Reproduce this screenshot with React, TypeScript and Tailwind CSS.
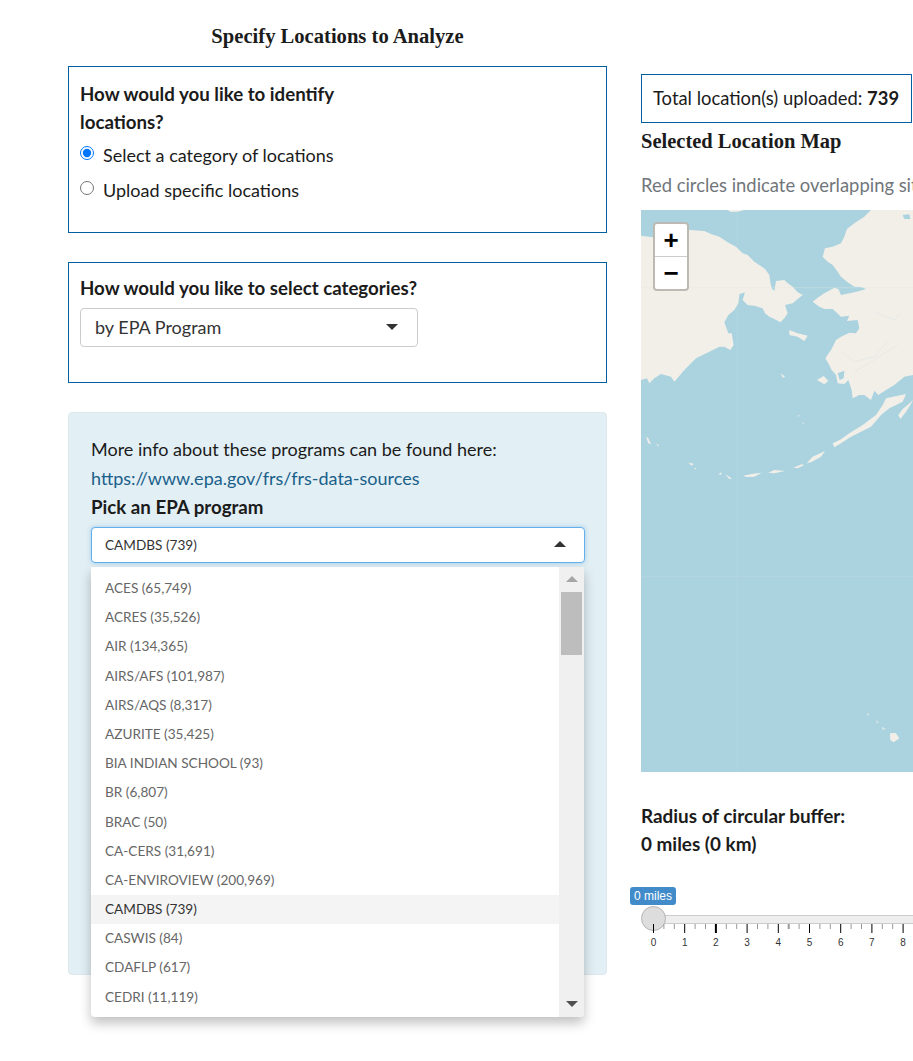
const BODY_FONT = 'font-["Lato","Noto_Sans",sans-serif]';

const programs = [
  'ACES (65,749)',
  'ACRES (35,526)',
  'AIR (134,365)',
  'AIRS/AFS (101,987)',
  'AIRS/AQS (8,317)',
  'AZURITE (35,425)',
  'BIA INDIAN SCHOOL (93)',
  'BR (6,807)',
  'BRAC (50)',
  'CA-CERS (31,691)',
  'CA-ENVIROVIEW (200,969)',
  'CAMDBS (739)',
  'CASWIS (84)',
  'CDAFLP (617)',
  'CEDRI (11,119)',
];

function Caret({ up, className }: { up?: boolean; className?: string }) {
  return (
    <svg width="12" height="6" viewBox="0 0 12 6" className={className}>
      <path d={up ? 'M0 6 L6 0 L12 6 Z' : 'M0 0 L12 0 L6 6 Z'} fill="currentColor" />
    </svg>
  );
}

function ScrollBar() {
  return (
    <div className="w-[25px] bg-[#f0f0f0] flex flex-col items-center shrink-0">
      <Caret up className="mt-[9px] text-[#a6a6a6]" />
      <div className="w-[21px] h-[63px] bg-[#bdbdbd] mt-[10px]" />
      <Caret className="mt-auto mb-[10px] text-[#505050]" />
    </div>
  );
}

function ProgramMenu() {
  return (
    <div className="absolute left-0 top-full mt-[4px] w-[493px] h-[450px] bg-white rounded-b-[4px] overflow-hidden flex shadow-[0_6px_12px_rgba(0,0,0,0.25)] z-10">
      <div className="flex-1 pt-[7px]">
        {programs.map((p) => (
          <div
            key={p}
            className={`h-[29.2px] leading-[29.2px] pl-[14px] text-[13.6px] ${
              p === 'CAMDBS (739)' ? 'bg-[#f4f4f4] text-[#333333]' : 'text-[#666666]'
            }`}
          >
            {p}
          </div>
        ))}
      </div>
      <ScrollBar />
    </div>
  );
}

function AlaskaMap() {
  return (
    <svg viewBox="0 15 816 1686" width="272" height="562" className="block">
      <defs>
        <filter id="tileBlur" x="-5%" y="-5%" width="110%" height="110%">
          <feGaussianBlur stdDeviation="1.4" />
        </filter>
      </defs>
      <rect x="0" y="15" width="816" height="1686" fill="#aad3df" />
      <g stroke="#b5d8e0" strokeWidth="2" fill="none">
        <path d="M288 15 V1701" />
        <path d="M0 1115 H816" />
      </g>
      <g fill="#f2efe9" filter="url(#tileBlur)">
        {/* Chukotka */}
        <path d="M0 92 L60 100 L145 75 L190 78 L212 88 L235 95 L260 112 L285 125 L305 145 L320 150 L340 170 L355 180 L372 192 L385 210 L388 232 L392 250 L400 258 L405 228 L430 225 L440 235 L455 245 L470 262 L485 270 L470 282 L455 295 L432 300 L440 325 L430 340 L418 352 L400 342 L385 335 L372 325 L365 310 L340 302 L320 300 L305 285 L312 262 L295 268 L292 295 L280 315 L262 330 L250 352 L262 385 L272 385 L278 420 L268 435 L250 425 L235 425 L205 440 L165 460 L130 495 L100 530 L90 515 L60 507 L40 520 L25 535 L18 520 L0 525 Z" />
        <path d="M260 15 L310 15 L290 20 L270 21 Z" />
        {/* Mainland Alaska */}
        <path d="M816 15 L690 15 L680 25 L670 35 L640 55 L618 72 L610 95 L600 115 L575 125 L552 130 L545 155 L560 170 L575 180 L590 200 L600 215 L620 232 L640 245 L660 246 L675 252 L655 258 L640 262 L600 270 L592 252 L580 248 L550 265 L530 278 L515 290 L535 305 L550 312 L575 312 L600 335 L625 332 L618 348 L650 345 L655 370 L645 385 L625 383 L600 395 L585 405 L570 435 L553 460 L565 480 L572 495 L585 510 L590 535 L610 537 L622 525 L632 555 L635 580 L655 570 L670 570 L690 585 L700 557 L712 570 L735 555 L760 540 L790 515 L816 510 Z" />
        {/* Alaska peninsula */}
        <path d="M735 580 L795 567 L785 590 L745 610 L720 630 L690 665 L660 680 L630 695 L600 715 L580 727 L575 715 L600 703 L625 685 L665 660 L705 630 L725 600 Z" />
        {/* Kodiak */}
        <path d="M816 585 L808 600 L795 620 L778 642 L772 630 L785 612 L800 600 Z" />
        {/* St Lawrence, Nunivak, small islands */}
        <path d="M445 375 L470 385 L500 392 L490 408 L470 395 L445 390 Z" />
        <path d="M528 525 L548 513 L562 528 L550 538 Z" />
        <path d="M420 505 L432 515 L425 518 Z" />
        <path d="M470 630 L476 632 L472 635 Z" />
        <path d="M484 652 L490 654 L486 657 Z" />
        {/* Aleutian chain */}
        <path d="M497 775 L515 755 L552 738 L540 755 L510 772 Z" />
        <path d="M457 788 L482 778 L490 780 L470 790 Z" />
        <path d="M382 803 L400 795 L432 798 L400 805 Z" />
        <path d="M307 812 L335 806 L362 803 L340 815 L315 816 Z" />
        <path d="M232 808 L242 802 L240 810 Z" />
        <path d="M252 808 L272 820 L266 823 Z" />
        <path d="M142 773 L158 776 L152 782 Z" />
        <path d="M160 788 L166 790 L162 794 Z" />
        <path d="M15 695 L22 700 L30 718 L22 715 Z" />
        <path d="M45 715 L54 722 L50 724 Z" />
        {/* Hawaii */}
        <path d="M747 1585 L764 1584 L775 1600 L758 1612 L748 1606 Z" />
        <path d="M722 1565 L736 1572 L724 1575 Z" opacity="0.6" />
        <path d="M678 1524 L686 1527 L680 1534 Z" opacity="0.6" />
        <path d="M704 1546 L714 1552 L708 1556 Z" opacity="0.6" />
      </g>
      <path d="M0 248 H816" stroke="#e8e6e0" strokeOpacity="0.5" strokeWidth="2" fill="none" />
      <g fill="#aad3df" filter="url(#tileBlur)">
        <path d="M785 30 L805 28 L808 42 L790 42 Z" />
        <path d="M590 505 L610 497 L608 520 L596 525 Z" />
        <path d="M745 550 L775 535 L760 555 L748 562 Z" />
      </g>
      <g stroke="#dfe6e6" strokeWidth="2" fill="none">
        <path d="M600 440 L640 470 L700 455 L740 410" />
        <path d="M700 320 L760 345 L780 325" />
        <path d="M640 500 L690 470 L770 420" />
      </g>
    </svg>
  );
}

function ZoomControl() {
  return (
    <div className="absolute left-[12px] top-[12px] w-[36px] h-[69px] bg-white rounded-[4px] border-2 border-[#bdbab4] flex flex-col font-['Liberation_Sans',sans-serif] text-black">
      <div className="h-[33px] border-b border-[#cccccc] flex items-center justify-center text-[26px] font-bold leading-none">+</div>
      <div className="flex-1 flex items-center justify-center text-[26px] font-bold leading-none">−</div>
    </div>
  );
}

function BufferSlider() {
  const ticks = Array.from({ length: 26 }, (_, i) => i);
  return (
    <div className="relative h-[72px] mt-[29px] -ml-[11px] w-[283px]">
      <div className="absolute left-0 top-0 h-[18px] w-[46px] bg-[#428bca] rounded-[3px] text-white text-[12px] leading-[18px] text-center font-['Liberation_Sans',sans-serif]">
        0 miles
      </div>
      <div className="absolute left-[23px] right-0 top-[28px] h-[9px] bg-[#eeeeee] border-y border-[#cccccc]" />
      <div className="absolute left-[11px] top-[19px] w-[25px] h-[25px] rounded-full bg-[#dddddd] border border-[#b5b5b5]" />
      <svg width="283" height="34" className="absolute left-0 top-[37px]">
        {ticks.map((i) => {
          const x = 23.5 + i * 10.4;
          const major = i % 3 === 0;
          const heavy = i === 6 || i === 13;
          return (
            <line
              key={i}
              x1={x}
              x2={x}
              y1={0}
              y2={major ? 9 : 5}
              stroke={major ? '#000000' : '#999999'}
              strokeWidth={heavy ? 2 : 1}
            />
          );
        })}
        {ticks
          .filter((i) => i % 3 === 0)
          .map((i) => (
            <text key={i} x={23.5 + i * 10.4} y={22} textAnchor="middle" fontSize="10" fill="#333333" fontFamily="Liberation Sans">
              {i / 3}
            </text>
          ))}
      </svg>
    </div>
  );
}

export default function App() {
  return (
    <div className={`w-[913px] h-[1061px] overflow-hidden bg-white flex pl-[68px] gap-[34px] text-[18px] text-[#1b1b1b] ${BODY_FONT}`}>
      {/* Left column */}
      <div className="w-[539px] shrink-0">
        <h2 className="h-[66px] pt-[24px] leading-[25px] text-center text-[20.6px] font-bold font-['Liberation_Serif',serif]">
          Specify Locations to Analyze
        </h2>

        <div className="h-[167px] border border-[#005ea2] px-[11px] pt-[13px]">
          <div className="w-[290px] text-[18.7px] font-bold leading-[28px]">How would you like to identify locations?</div>
          <label className="flex items-center h-[35px] mt-[2px]">
            <input type="radio" name="mode" defaultChecked className="w-[14px] h-[14px] m-0 mr-[9px] -mt-[5px]" />
            Select a category of locations
          </label>
          <label className="flex items-center h-[35px]">
            <input type="radio" name="mode" className="w-[14px] h-[14px] m-0 mr-[9px] -mt-[6px]" />
            Upload specific locations
          </label>
        </div>

        <div className="h-[121px] mt-[29px] border border-[#005ea2] px-[11px] pt-[11px]">
          <div className="text-[18.7px] font-bold leading-[28px]">How would you like to select categories?</div>
          <div className="w-[338px] h-[39px] mt-[6px] border border-[#cccccc] rounded-[4px] flex items-center justify-between pl-[14px] pr-[19px] text-[#333333]">
            by EPA Program
            <Caret className="text-[#333333] -mt-[2px]" />
          </div>
        </div>

        <div className="h-[563px] mt-[29px] bg-[#e2eff4] border border-[#dce8ec] rounded-[4px] px-[22px] pt-[22px]">
          <div className="leading-[29px]">More info about these programs can be found here:</div>
          <div className="leading-[29px] text-[#1a5f8a]">https://www.epa.gov/frs/frs-data-sources</div>
          <div className="leading-[29px] text-[18.7px] font-bold">Pick an EPA program</div>
          <div className="relative w-[494px] h-[36px] mt-[5px]">
            <div className="h-full bg-white border border-[#66afe9] rounded-[4px] shadow-[0_0_4px_rgba(102,175,233,0.6)] flex items-center justify-between pl-[13px] pr-[18px] text-[13.6px] text-[#333333]">
              CAMDBS (739)
              <Caret up className="text-[#333333] -mt-[2px]" />
            </div>
            <ProgramMenu />
          </div>
        </div>
      </div>

      {/* Right column */}
      <div className="w-[283px] shrink-0 pt-[74px] whitespace-nowrap">
        <div className="w-[271px] h-[49px] border border-[#005ea2] pl-[11px] leading-[47px] text-[18.4px]">
          Total location(s) uploaded: <span className="font-bold">739</span>
        </div>
        <h3 className="mt-[3px] leading-[30px] text-[20.5px] font-bold font-['Liberation_Serif',serif]">Selected Location Map</h3>
        <div className="mt-[15px] leading-[28px] text-[18.4px] text-[#71767a]">Red circles indicate overlapping sites</div>
        <div className="relative mt-[11px] w-[272px] h-[562px]">
          <AlaskaMap />
          <ZoomControl />
        </div>
        <div className="mt-[30px] text-[18.9px] font-bold leading-[28px]">Radius of circular buffer:</div>
        <div className="text-[18.9px] font-bold leading-[28px]">0 miles (0 km)</div>
        <BufferSlider />
      </div>
    </div>
  );
}
